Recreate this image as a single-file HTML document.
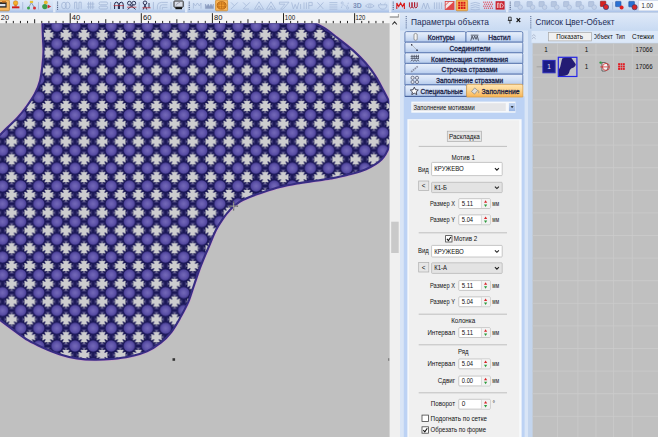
<!DOCTYPE html>
<html><head><meta charset="utf-8"><title>UI</title>
<style>html,body{margin:0;padding:0;background:#c0c0c0}body{width:658px;height:437px;overflow:hidden}svg{display:block}</style>
</head><body>
<svg width="658" height="437" viewBox="0 0 658 437" font-family="Liberation Sans, sans-serif">
<defs>
<linearGradient id="gTb" x1="0" y1="0" x2="0" y2="1"><stop offset="0" stop-color="#dde8f8"/><stop offset="0.7" stop-color="#c9daf1"/><stop offset="0.86" stop-color="#b4c9ea"/><stop offset="1" stop-color="#a0bbe6"/></linearGradient>
<linearGradient id="gTitle" x1="0" y1="0" x2="0" y2="1"><stop offset="0" stop-color="#dfe9f8"/><stop offset="1" stop-color="#c8daf2"/></linearGradient>
<linearGradient id="gTab" x1="0" y1="0" x2="0" y2="1"><stop offset="0" stop-color="#eaf1fc"/><stop offset="0.5" stop-color="#d3e1f6"/><stop offset="1" stop-color="#b4caec"/></linearGradient>
<linearGradient id="gTabA" x1="0" y1="0" x2="0" y2="1"><stop offset="0" stop-color="#ffe6b4"/><stop offset="0.5" stop-color="#fdd38c"/><stop offset="1" stop-color="#f8b454"/></linearGradient>
<linearGradient id="gBtnB" x1="0" y1="0" x2="0" y2="1"><stop offset="0" stop-color="#c6d8f2"/><stop offset="1" stop-color="#9ab6e4"/></linearGradient>
<radialGradient id="rg" cx="50%" cy="50%" r="50%"><stop offset="0" stop-color="#7469b8"/><stop offset="0.5" stop-color="#6358ac"/><stop offset="0.85" stop-color="#52479e"/><stop offset="1" stop-color="#453a92"/></radialGradient>
<pattern id="mot" x="47.84" y="17.11" width="18.11" height="17.78" patternUnits="userSpaceOnUse">
<rect width="18.11" height="17.78" fill="#cdcdcf"/>
<circle cx="-9.05" cy="-8.89" r="6.9" fill="#2c2476"/><rect x="-4.05" y="-11.49" width="8.11" height="5.2" fill="#241d6a" opacity="0.85"/><rect x="-11.55" y="-3.89" width="5" height="7.78" fill="#241d6a" opacity="0.85"/><path d="M-4.65 -7.34L1.54 -7.99L1.54 -9.79L-4.65 -10.44ZM-5.58 -5.77L-0.65 -4.87L-0.27 -5.79L-4.40 -8.64ZM-7.04 -4.68L-2.83 -1.96L-2.13 -2.67L-4.85 -6.87ZM-8.80 -4.23L-5.96 -0.11L-5.03 -0.49L-5.94 -5.42ZM-10.61 -4.49L-9.96 1.71L-8.15 1.71L-7.50 -4.49ZM-12.17 -5.42L-13.08 -0.49L-12.15 -0.11L-9.31 -4.23ZM-13.26 -6.87L-15.98 -2.67L-15.28 -1.96L-11.07 -4.68ZM-13.71 -8.64L-17.84 -5.79L-17.46 -4.87L-12.53 -5.77ZM-13.46 -10.44L-19.66 -9.79L-19.66 -7.99L-13.46 -7.34ZM-12.53 -12.01L-17.46 -12.91L-17.84 -11.99L-13.71 -9.14ZM-11.07 -13.10L-15.28 -15.82L-15.98 -15.11L-13.26 -10.91ZM-9.31 -13.55L-12.15 -17.67L-13.08 -17.29L-12.17 -12.36ZM-7.50 -13.29L-8.16 -19.49L-9.96 -19.49L-10.61 -13.29ZM-5.94 -12.36L-5.03 -17.29L-5.96 -17.67L-8.80 -13.55ZM-4.85 -10.91L-2.13 -15.11L-2.83 -15.82L-7.04 -13.10ZM-4.40 -9.14L-0.27 -11.99L-0.65 -12.91L-5.58 -12.01Z" fill="#1a1755"/><circle cx="-9.05" cy="8.89" r="6.9" fill="#2c2476"/><rect x="-4.05" y="6.29" width="8.11" height="5.2" fill="#241d6a" opacity="0.85"/><rect x="-11.55" y="13.89" width="5" height="7.78" fill="#241d6a" opacity="0.85"/><path d="M-4.65 10.44L1.54 9.79L1.54 7.99L-4.65 7.34ZM-5.58 12.01L-0.65 12.91L-0.27 11.99L-4.40 9.14ZM-7.04 13.10L-2.83 15.82L-2.13 15.11L-4.85 10.91ZM-8.80 13.55L-5.96 17.67L-5.03 17.29L-5.94 12.36ZM-10.61 13.29L-9.96 19.49L-8.15 19.49L-7.50 13.29ZM-12.17 12.36L-13.08 17.29L-12.15 17.67L-9.31 13.55ZM-13.26 10.91L-15.98 15.11L-15.28 15.82L-11.07 13.10ZM-13.71 9.14L-17.84 11.99L-17.46 12.91L-12.53 12.01ZM-13.46 7.34L-19.66 7.99L-19.66 9.79L-13.46 10.44ZM-12.53 5.77L-17.46 4.87L-17.84 5.79L-13.71 8.64ZM-11.07 4.68L-15.28 1.96L-15.98 2.67L-13.26 6.87ZM-9.31 4.23L-12.15 0.11L-13.08 0.49L-12.17 5.42ZM-7.50 4.49L-8.16 -1.71L-9.96 -1.71L-10.61 4.49ZM-5.94 5.42L-5.03 0.49L-5.96 0.11L-8.80 4.23ZM-4.85 6.87L-2.13 2.67L-2.83 1.96L-7.04 4.68ZM-4.40 8.64L-0.27 5.79L-0.65 4.87L-5.58 5.77Z" fill="#1a1755"/><circle cx="-9.05" cy="26.67" r="6.9" fill="#2c2476"/><rect x="-4.05" y="24.07" width="8.11" height="5.2" fill="#241d6a" opacity="0.85"/><rect x="-11.55" y="31.67" width="5" height="7.78" fill="#241d6a" opacity="0.85"/><path d="M-4.65 28.22L1.54 27.57L1.54 25.77L-4.65 25.12ZM-5.58 29.79L-0.65 30.69L-0.27 29.77L-4.40 26.92ZM-7.04 30.88L-2.83 33.60L-2.13 32.89L-4.85 28.69ZM-8.80 31.33L-5.96 35.45L-5.03 35.07L-5.94 30.14ZM-10.61 31.07L-9.96 37.27L-8.15 37.27L-7.50 31.07ZM-12.17 30.14L-13.08 35.07L-12.15 35.45L-9.31 31.33ZM-13.26 28.69L-15.98 32.89L-15.28 33.60L-11.07 30.88ZM-13.71 26.92L-17.84 29.77L-17.46 30.69L-12.53 29.79ZM-13.46 25.12L-19.66 25.77L-19.66 27.57L-13.46 28.22ZM-12.53 23.55L-17.46 22.65L-17.84 23.57L-13.71 26.42ZM-11.07 22.46L-15.28 19.74L-15.98 20.45L-13.26 24.65ZM-9.31 22.01L-12.15 17.89L-13.08 18.27L-12.17 23.20ZM-7.50 22.27L-8.16 16.07L-9.96 16.07L-10.61 22.27ZM-5.94 23.20L-5.03 18.27L-5.96 17.89L-8.80 22.01ZM-4.85 24.65L-2.13 20.45L-2.83 19.74L-7.04 22.46ZM-4.40 26.42L-0.27 23.57L-0.65 22.65L-5.58 23.55Z" fill="#1a1755"/><circle cx="9.05" cy="-8.89" r="6.9" fill="#2c2476"/><rect x="14.05" y="-11.49" width="8.11" height="5.2" fill="#241d6a" opacity="0.85"/><rect x="6.55" y="-3.89" width="5" height="7.78" fill="#241d6a" opacity="0.85"/><path d="M13.46 -7.34L19.66 -7.99L19.66 -9.79L13.46 -10.44ZM12.53 -5.77L17.46 -4.87L17.84 -5.79L13.71 -8.64ZM11.07 -4.68L15.28 -1.96L15.98 -2.67L13.26 -6.87ZM9.31 -4.23L12.15 -0.11L13.08 -0.49L12.17 -5.42ZM7.50 -4.49L8.15 1.71L9.96 1.71L10.61 -4.49ZM5.94 -5.42L5.03 -0.49L5.96 -0.11L8.80 -4.23ZM4.85 -6.87L2.13 -2.67L2.83 -1.96L7.04 -4.68ZM4.40 -8.64L0.27 -5.79L0.65 -4.87L5.58 -5.77ZM4.65 -10.44L-1.54 -9.79L-1.54 -7.99L4.65 -7.34ZM5.58 -12.01L0.65 -12.91L0.27 -11.99L4.40 -9.14ZM7.04 -13.10L2.83 -15.82L2.13 -15.11L4.85 -10.91ZM8.80 -13.55L5.96 -17.67L5.03 -17.29L5.94 -12.36ZM10.61 -13.29L9.95 -19.49L8.15 -19.49L7.50 -13.29ZM12.17 -12.36L13.08 -17.29L12.15 -17.67L9.31 -13.55ZM13.26 -10.91L15.98 -15.11L15.28 -15.82L11.07 -13.10ZM13.71 -9.14L17.84 -11.99L17.46 -12.91L12.53 -12.01Z" fill="#1a1755"/><circle cx="9.05" cy="8.89" r="6.9" fill="#2c2476"/><rect x="14.05" y="6.29" width="8.11" height="5.2" fill="#241d6a" opacity="0.85"/><rect x="6.55" y="13.89" width="5" height="7.78" fill="#241d6a" opacity="0.85"/><path d="M13.46 10.44L19.66 9.79L19.66 7.99L13.46 7.34ZM12.53 12.01L17.46 12.91L17.84 11.99L13.71 9.14ZM11.07 13.10L15.28 15.82L15.98 15.11L13.26 10.91ZM9.31 13.55L12.15 17.67L13.08 17.29L12.17 12.36ZM7.50 13.29L8.15 19.49L9.96 19.49L10.61 13.29ZM5.94 12.36L5.03 17.29L5.96 17.67L8.80 13.55ZM4.85 10.91L2.13 15.11L2.83 15.82L7.04 13.10ZM4.40 9.14L0.27 11.99L0.65 12.91L5.58 12.01ZM4.65 7.34L-1.54 7.99L-1.54 9.79L4.65 10.44ZM5.58 5.77L0.65 4.87L0.27 5.79L4.40 8.64ZM7.04 4.68L2.83 1.96L2.13 2.67L4.85 6.87ZM8.80 4.23L5.96 0.11L5.03 0.49L5.94 5.42ZM10.61 4.49L9.95 -1.71L8.15 -1.71L7.50 4.49ZM12.17 5.42L13.08 0.49L12.15 0.11L9.31 4.23ZM13.26 6.87L15.98 2.67L15.28 1.96L11.07 4.68ZM13.71 8.64L17.84 5.79L17.46 4.87L12.53 5.77Z" fill="#1a1755"/><circle cx="9.05" cy="26.67" r="6.9" fill="#2c2476"/><rect x="14.05" y="24.07" width="8.11" height="5.2" fill="#241d6a" opacity="0.85"/><rect x="6.55" y="31.67" width="5" height="7.78" fill="#241d6a" opacity="0.85"/><path d="M13.46 28.22L19.66 27.57L19.66 25.77L13.46 25.12ZM12.53 29.79L17.46 30.69L17.84 29.77L13.71 26.92ZM11.07 30.88L15.28 33.60L15.98 32.89L13.26 28.69ZM9.31 31.33L12.15 35.45L13.08 35.07L12.17 30.14ZM7.50 31.07L8.15 37.27L9.96 37.27L10.61 31.07ZM5.94 30.14L5.03 35.07L5.96 35.45L8.80 31.33ZM4.85 28.69L2.13 32.89L2.83 33.60L7.04 30.88ZM4.40 26.92L0.27 29.77L0.65 30.69L5.58 29.79ZM4.65 25.12L-1.54 25.77L-1.54 27.57L4.65 28.22ZM5.58 23.55L0.65 22.65L0.27 23.57L4.40 26.42ZM7.04 22.46L2.83 19.74L2.13 20.45L4.85 24.65ZM8.80 22.01L5.96 17.89L5.03 18.27L5.94 23.20ZM10.61 22.27L9.95 16.07L8.15 16.07L7.50 22.27ZM12.17 23.20L13.08 18.27L12.15 17.89L9.31 22.01ZM13.26 24.65L15.98 20.45L15.28 19.74L11.07 22.46ZM13.71 26.42L17.84 23.57L17.46 22.65L12.53 23.55Z" fill="#1a1755"/><circle cx="27.16" cy="-8.89" r="6.9" fill="#2c2476"/><rect x="32.16" y="-11.49" width="8.11" height="5.2" fill="#241d6a" opacity="0.85"/><rect x="24.66" y="-3.89" width="5" height="7.78" fill="#241d6a" opacity="0.85"/><path d="M31.56 -7.34L37.77 -7.99L37.77 -9.79L31.56 -10.44ZM30.64 -5.77L35.57 -4.87L35.95 -5.79L31.82 -8.64ZM29.18 -4.68L33.39 -1.96L34.09 -2.67L31.37 -6.87ZM27.42 -4.23L30.26 -0.11L31.19 -0.49L30.28 -5.42ZM25.61 -4.49L26.27 1.71L28.06 1.71L28.71 -4.49ZM24.05 -5.42L23.14 -0.49L24.07 -0.11L26.91 -4.23ZM22.96 -6.87L20.24 -2.67L20.94 -1.96L25.15 -4.68ZM22.51 -8.64L18.38 -5.79L18.76 -4.87L23.69 -5.77ZM22.77 -10.44L16.56 -9.79L16.56 -7.99L22.77 -7.34ZM23.69 -12.01L18.76 -12.91L18.38 -11.99L22.51 -9.14ZM25.15 -13.10L20.94 -15.82L20.24 -15.11L22.96 -10.91ZM26.91 -13.55L24.07 -17.67L23.14 -17.29L24.05 -12.36ZM28.71 -13.29L28.06 -19.49L26.26 -19.49L25.61 -13.29ZM30.28 -12.36L31.19 -17.29L30.26 -17.67L27.42 -13.55ZM31.37 -10.91L34.09 -15.11L33.39 -15.82L29.18 -13.10ZM31.82 -9.14L35.95 -11.99L35.57 -12.91L30.64 -12.01Z" fill="#1a1755"/><circle cx="27.16" cy="8.89" r="6.9" fill="#2c2476"/><rect x="32.16" y="6.29" width="8.11" height="5.2" fill="#241d6a" opacity="0.85"/><rect x="24.66" y="13.89" width="5" height="7.78" fill="#241d6a" opacity="0.85"/><path d="M31.56 10.44L37.77 9.79L37.77 7.99L31.56 7.34ZM30.64 12.01L35.57 12.91L35.95 11.99L31.82 9.14ZM29.18 13.10L33.39 15.82L34.09 15.11L31.37 10.91ZM27.42 13.55L30.26 17.67L31.19 17.29L30.28 12.36ZM25.61 13.29L26.27 19.49L28.06 19.49L28.71 13.29ZM24.05 12.36L23.14 17.29L24.07 17.67L26.91 13.55ZM22.96 10.91L20.24 15.11L20.94 15.82L25.15 13.10ZM22.51 9.14L18.38 11.99L18.76 12.91L23.69 12.01ZM22.77 7.34L16.56 7.99L16.56 9.79L22.77 10.44ZM23.69 5.77L18.76 4.87L18.38 5.79L22.51 8.64ZM25.15 4.68L20.94 1.96L20.24 2.67L22.96 6.87ZM26.91 4.23L24.07 0.11L23.14 0.49L24.05 5.42ZM28.71 4.49L28.06 -1.71L26.26 -1.71L25.61 4.49ZM30.28 5.42L31.19 0.49L30.26 0.11L27.42 4.23ZM31.37 6.87L34.09 2.67L33.39 1.96L29.18 4.68ZM31.82 8.64L35.95 5.79L35.57 4.87L30.64 5.77Z" fill="#1a1755"/><circle cx="27.16" cy="26.67" r="6.9" fill="#2c2476"/><rect x="32.16" y="24.07" width="8.11" height="5.2" fill="#241d6a" opacity="0.85"/><rect x="24.66" y="31.67" width="5" height="7.78" fill="#241d6a" opacity="0.85"/><path d="M31.56 28.22L37.77 27.57L37.77 25.77L31.56 25.12ZM30.64 29.79L35.57 30.69L35.95 29.77L31.82 26.92ZM29.18 30.88L33.39 33.60L34.09 32.89L31.37 28.69ZM27.42 31.33L30.26 35.45L31.19 35.07L30.28 30.14ZM25.61 31.07L26.27 37.27L28.06 37.27L28.71 31.07ZM24.05 30.14L23.14 35.07L24.07 35.45L26.91 31.33ZM22.96 28.69L20.24 32.89L20.94 33.60L25.15 30.88ZM22.51 26.92L18.38 29.77L18.76 30.69L23.69 29.79ZM22.77 25.12L16.56 25.77L16.56 27.57L22.77 28.22ZM23.69 23.55L18.76 22.65L18.38 23.57L22.51 26.42ZM25.15 22.46L20.94 19.74L20.24 20.45L22.96 24.65ZM26.91 22.01L24.07 17.89L23.14 18.27L24.05 23.20ZM28.71 22.27L28.06 16.07L26.26 16.07L25.61 22.27ZM30.28 23.20L31.19 18.27L30.26 17.89L27.42 22.01ZM31.37 24.65L34.09 20.45L33.39 19.74L29.18 22.46ZM31.82 26.42L35.95 23.57L35.57 22.65L30.64 23.55Z" fill="#1a1755"/>
<circle cx="9.055" cy="8.89" r="5.7" fill="url(#rg)"/>
</pattern>
<clipPath id="cv"><rect x="0" y="23" width="389.6" height="414"/></clipPath>
</defs>
<rect x="0" y="0" width="658" height="437" fill="#c0c0c0"/>
<g clip-path="url(#cv)"><g style="filter:blur(0.45px)">
<path d="M42.5 23.0C87.8 23.0 269.2 23.0 314.5 23.0C316.1 23.8 320.2 25.6 324.0 28.0C327.8 30.4 332.2 33.9 337.0 37.6C341.8 41.3 348.2 46.1 353.0 50.4C357.8 54.7 362.1 59.0 365.8 63.3C369.5 67.6 372.5 71.5 375.4 76.0C378.3 80.5 381.0 86.0 383.4 90.5C385.8 95.0 388.2 98.8 389.6 103.0C391.0 107.2 391.2 111.2 391.5 116.0C391.8 120.8 391.9 126.9 391.5 132.0C391.1 137.1 390.9 141.9 389.2 146.5C387.5 151.1 385.4 155.7 381.5 159.5C377.6 163.3 371.8 166.6 366.0 169.2C360.2 171.8 352.9 173.4 347.0 175.0C341.1 176.6 336.0 177.5 330.5 178.5C325.0 179.5 319.4 180.2 313.8 181.0C308.2 181.8 302.6 182.5 297.0 183.5C291.4 184.5 285.6 185.6 280.0 187.0C274.4 188.4 268.7 190.3 263.6 192.0C258.5 193.7 253.7 195.3 249.6 197.0C245.5 198.7 242.0 200.2 238.8 202.3C235.6 204.4 232.9 206.7 230.2 209.6C227.4 212.5 224.7 216.1 222.3 219.6C219.9 223.1 217.8 226.3 215.8 230.3C213.8 234.3 212.0 239.1 210.2 243.4C208.4 247.7 206.5 251.9 204.8 256.0C203.1 260.1 201.8 263.0 200.0 267.8C198.2 272.6 196.2 278.9 194.2 284.6C192.2 290.3 190.6 296.6 188.2 302.2C185.8 307.8 182.8 313.0 180.0 318.0C177.2 323.0 174.5 327.9 171.3 332.0C168.1 336.1 164.9 339.5 160.8 342.7C156.7 345.9 152.1 349.1 146.9 351.4C141.7 353.7 135.2 355.3 129.4 356.6C123.6 357.9 117.7 358.5 111.9 359.0C106.1 359.5 100.2 359.9 94.4 359.8C88.6 359.7 82.7 359.3 76.9 358.4C71.1 357.5 65.2 356.1 59.4 354.2C53.6 352.3 47.2 349.5 42.0 347.2C36.8 344.9 32.7 343.0 28.0 340.2C23.3 337.4 18.7 333.8 14.0 330.4C9.3 327.0 2.8 322.1 0.0 320.0C-2.8 317.9 -2.5 318.3 -3.0 318.0C-3.0 288.0 -3.0 168.0 -3.0 138.0C-2.5 137.5 -1.8 136.8 0.0 135.0C1.8 133.2 5.1 129.9 8.0 127.0C10.9 124.1 14.4 121.1 17.6 117.6C20.8 114.1 24.1 110.0 27.0 106.0C29.9 102.0 32.8 97.8 35.0 93.6C37.2 89.4 38.8 85.8 40.0 81.0C41.2 76.2 41.9 69.8 42.5 65.0C43.1 60.2 43.4 56.3 43.5 52.0C43.6 47.7 43.2 43.8 43.0 39.0C42.8 34.2 42.6 25.7 42.5 23.0Z" fill="none" stroke="#e070dc" stroke-width="3.1" opacity="0.45"/>
<path d="M42.5 23.0C87.8 23.0 269.2 23.0 314.5 23.0C316.1 23.8 320.2 25.6 324.0 28.0C327.8 30.4 332.2 33.9 337.0 37.6C341.8 41.3 348.2 46.1 353.0 50.4C357.8 54.7 362.1 59.0 365.8 63.3C369.5 67.6 372.5 71.5 375.4 76.0C378.3 80.5 381.0 86.0 383.4 90.5C385.8 95.0 388.2 98.8 389.6 103.0C391.0 107.2 391.2 111.2 391.5 116.0C391.8 120.8 391.9 126.9 391.5 132.0C391.1 137.1 390.9 141.9 389.2 146.5C387.5 151.1 385.4 155.7 381.5 159.5C377.6 163.3 371.8 166.6 366.0 169.2C360.2 171.8 352.9 173.4 347.0 175.0C341.1 176.6 336.0 177.5 330.5 178.5C325.0 179.5 319.4 180.2 313.8 181.0C308.2 181.8 302.6 182.5 297.0 183.5C291.4 184.5 285.6 185.6 280.0 187.0C274.4 188.4 268.7 190.3 263.6 192.0C258.5 193.7 253.7 195.3 249.6 197.0C245.5 198.7 242.0 200.2 238.8 202.3C235.6 204.4 232.9 206.7 230.2 209.6C227.4 212.5 224.7 216.1 222.3 219.6C219.9 223.1 217.8 226.3 215.8 230.3C213.8 234.3 212.0 239.1 210.2 243.4C208.4 247.7 206.5 251.9 204.8 256.0C203.1 260.1 201.8 263.0 200.0 267.8C198.2 272.6 196.2 278.9 194.2 284.6C192.2 290.3 190.6 296.6 188.2 302.2C185.8 307.8 182.8 313.0 180.0 318.0C177.2 323.0 174.5 327.9 171.3 332.0C168.1 336.1 164.9 339.5 160.8 342.7C156.7 345.9 152.1 349.1 146.9 351.4C141.7 353.7 135.2 355.3 129.4 356.6C123.6 357.9 117.7 358.5 111.9 359.0C106.1 359.5 100.2 359.9 94.4 359.8C88.6 359.7 82.7 359.3 76.9 358.4C71.1 357.5 65.2 356.1 59.4 354.2C53.6 352.3 47.2 349.5 42.0 347.2C36.8 344.9 32.7 343.0 28.0 340.2C23.3 337.4 18.7 333.8 14.0 330.4C9.3 327.0 2.8 322.1 0.0 320.0C-2.8 317.9 -2.5 318.3 -3.0 318.0C-3.0 288.0 -3.0 168.0 -3.0 138.0C-2.5 137.5 -1.8 136.8 0.0 135.0C1.8 133.2 5.1 129.9 8.0 127.0C10.9 124.1 14.4 121.1 17.6 117.6C20.8 114.1 24.1 110.0 27.0 106.0C29.9 102.0 32.8 97.8 35.0 93.6C37.2 89.4 38.8 85.8 40.0 81.0C41.2 76.2 41.9 69.8 42.5 65.0C43.1 60.2 43.4 56.3 43.5 52.0C43.6 47.7 43.2 43.8 43.0 39.0C42.8 34.2 42.6 25.7 42.5 23.0Z" fill="url(#mot)" stroke="#372e82" stroke-width="2.1"/>
</g>
<rect x="172.5" y="358.2" width="2.6" height="2.6" fill="#333"/>
<rect x="388.4" y="358.2" width="1.2" height="2.6" fill="#555"/>
<path d="M233.6 201.6v9M229.1 206.1h9" stroke="#5e5e5e" stroke-width="1.2" fill="none"/>
<path d="M233.6 202.8v6.6M230.3 206.1h6.6" stroke="#e0e0e0" stroke-width="0.4" fill="none"/>
</g>
<rect x="0.00" y="0.00" width="658.00" height="12.70" fill="url(#gTb)" />
<rect x="0.00" y="12.60" width="658.00" height="0.50" fill="#e4ecf8" />
<rect x="-2.00" y="0.00" width="11.40" height="10.80" fill="#f8b75e" stroke="#c8862c" stroke-width="0.8" rx="1" />
<rect x="0.00" y="2.20" width="6.60" height="5.40" fill="#2a2a2a" />
<rect x="0.00" y="4.00" width="5.40" height="2.20" fill="#dfe3ea" />
<rect x="2.00" y="1.20" width="4.00" height="1.40" fill="#c06a1a" />
<circle cx="15.6" cy="3" r="2.3" fill="#f4b02a" stroke="#c87818" stroke-width="0.5"/>
<rect x="14.40" y="4.80" width="2.40" height="1.80" fill="#e07a20" />
<rect x="12.00" y="6.40" width="7.40" height="1.90" fill="#d01c1c" />
<line x1="22.70" y1="2.00" x2="22.70" y2="9.50" stroke="#9fb2d2" stroke-width="0.7" />
<path d="M31.4 2.6L28.6 7.6M31.4 2.6L34.4 7.6" fill="none" stroke="#6a7a9a" stroke-width="0.7" />
<rect x="29.90" y="0.80" width="3.20" height="2.20" fill="#e8c038" />
<circle cx="28.5" cy="8" r="1.5" fill="#38a048"/>
<circle cx="34.5" cy="8" r="1.5" fill="#d83038"/>
<line x1="38.50" y1="2.00" x2="38.50" y2="9.50" stroke="#9fb2d2" stroke-width="0.7" />
<circle cx="45.8" cy="2.4" r="1.9" fill="#e8b830"/>
<circle cx="44.8" cy="6.6" r="2.6" fill="#3c9a48"/>
<path d="M47.6 4.6l3.6 2-3.6 2z" fill="#d02c34" />
<rect x="53.10" y="0.00" width="2.40" height="12.40" fill="#dfe9f8" />
<rect x="57.10" y="1.60" width="1.00" height="1.00" fill="#44557a" /><rect x="57.10" y="3.40" width="1.00" height="1.00" fill="#44557a" /><rect x="57.10" y="5.20" width="1.00" height="1.00" fill="#44557a" /><rect x="57.10" y="7.00" width="1.00" height="1.00" fill="#44557a" /><rect x="57.10" y="8.80" width="1.00" height="1.00" fill="#44557a" />
<path d="M64 2.2a2.4 3.3 0 1 0 0 6.6a2.4 3.3 0 1 0 0-6.6M67.6 2.2a2.4 3.3 0 1 0 0 6.6a2.4 3.3 0 1 0 0-6.6" fill="none" stroke="#a6b9d8" stroke-width="0.9" />
<path d="M74.6 8.8V2.2h2.2v6.6h2.2V2.2h2.2v6.6" fill="none" stroke="#a6b9d8" stroke-width="0.9" />
<path d="M87 4h7.4M87 7h7.4M88.6 1.8v7.4M90.7 1.8v7.4M92.8 1.8v7.4" fill="none" stroke="#a6b9d8" stroke-width="0.9" />
<rect x="99.00" y="2.00" width="8.60" height="2.80" fill="none" stroke="#a6b9d8" stroke-width="0.9" rx="1.4" />
<rect x="99.00" y="6.20" width="8.60" height="2.80" fill="none" stroke="#a6b9d8" stroke-width="0.9" rx="1.4" />
<line x1="110.60" y1="2.00" x2="110.60" y2="9.50" stroke="#9fb2d2" stroke-width="0.7" />
<path d="M114.6 9v-4.6q0-2.2 1.9-2.2t1.9 2.2v4.6M119.4 9v-4.6q0-2.2 1.9-2.2t1.9 2.2v4.6" fill="none" stroke="#1e2448" stroke-width="1.0" />
<line x1="113.60" y1="5.60" x2="124.00" y2="5.60" stroke="#c02a30" stroke-width="0.7" />
<circle cx="129.4" cy="3.2" r="1.9" fill="none" stroke="#1e2448" stroke-width="0.9"/><circle cx="133.8" cy="3.2" r="1.9" fill="none" stroke="#1e2448" stroke-width="0.9"/>
<path d="M127.6 9.4l6-5M135.6 9.4l-6-5" fill="none" stroke="#1e2448" stroke-width="0.9" />
<line x1="127.00" y1="7.20" x2="136.40" y2="7.20" stroke="#c02a30" stroke-width="0.7" />
<line x1="139.20" y1="2.00" x2="139.20" y2="9.50" stroke="#9fb2d2" stroke-width="0.7" />
<circle cx="145" cy="2.8" r="1.8" fill="none" stroke="#1e2448" stroke-width="0.9"/>
<path d="M143.2 9.6l1.8-4.6 1.8 4.6M149 3v5" fill="none" stroke="#1e2448" stroke-width="0.9" />
<line x1="142.40" y1="7.80" x2="150.60" y2="7.80" stroke="#c02a30" stroke-width="0.8" />
<line x1="153.40" y1="2.00" x2="153.40" y2="9.50" stroke="#9fb2d2" stroke-width="0.7" />
<path d="M157.4 9.4V6q0-3.6 4-3.6h6.4M160 9.4V7q0-2.2 2.4-2.2h5M162.4 9.4V7.4h5" fill="none" stroke="#a6b9d8" stroke-width="0.8" />
<line x1="171.00" y1="2.00" x2="171.00" y2="9.50" stroke="#9fb2d2" stroke-width="0.7" />
<rect x="174.00" y="1.00" width="9.20" height="6.20" fill="#d8dde8" stroke="#2a2a2a" stroke-width="1" rx="0.6" />
<rect x="175.40" y="7.20" width="6.60" height="2.00" fill="#111" />
<path d="M176 5.6q1-3 4-3.2" fill="none" stroke="#778" stroke-width="0.6" />
<rect x="185.00" y="0.00" width="2.40" height="12.40" fill="#dfe9f8" />
<rect x="188.70" y="1.60" width="1.00" height="1.00" fill="#44557a" /><rect x="188.70" y="3.40" width="1.00" height="1.00" fill="#44557a" /><rect x="188.70" y="5.20" width="1.00" height="1.00" fill="#44557a" /><rect x="188.70" y="7.00" width="1.00" height="1.00" fill="#44557a" /><rect x="188.70" y="8.80" width="1.00" height="1.00" fill="#44557a" />
<path d="M193.4 8.6V3l2 3 2-3 2 3 1.6-3v5.6" fill="none" stroke="#a6b9d8" stroke-width="0.8" />
<path d="M205.4 8.6V4l1.4 2.4 1.4-2.4 1.4 2.4 1.4-2.4 1.4 2.4 1-2.4v4.6z" fill="#8a9cc0" stroke="#8a9cc0" stroke-width="0.5" />
<rect x="215.60" y="0.00" width="12.00" height="10.80" fill="#f9b457" stroke="#cc8a30" stroke-width="0.8" rx="1" />
<ellipse cx="221.6" cy="5.4" rx="4.4" ry="3.7" fill="#f4a030" stroke="#a85a10" stroke-width="0.8"/>
<path d="M217.4 4h8.4M217.4 6.8h8.4M221.6 1.8v7.2M219.4 2.4q-1.2 3 0 6M223.8 2.4q1.2 3 0 6" fill="none" stroke="#a85a10" stroke-width="0.5" />
<path d="M231 2.4l3.4 3.4 3.4-3.4M231 9l3.4-3.2" fill="none" stroke="#a6b9d8" stroke-width="0.8" />
<path d="M243 2.4l3.4 3.4 3.4-3.4M243 9l3.4-3.2M244 9h5" fill="none" stroke="#a6b9d8" stroke-width="0.8" />
<path d="M254.4 9.2l4.6-7.4 4.6 7.4zM257 9.2l2-3.4 2 3.4" fill="none" stroke="#a6b9d8" stroke-width="0.8" />
<path d="M266.4 9.2l4.6-7.4 4.6 7.4zM269 9.2l2-3.4 2 3.4" fill="none" stroke="#a6b9d8" stroke-width="0.8" />
<path d="M279.4 2.2h9.6l-6 7h-2.4l4.4-5h-5.6z" fill="none" stroke="#a6b9d8" stroke-width="0.8" />
<path d="M291.6 2.4l1.8 6.6 1.8-4.6 1.8 4.6 1.8-6.6M300.6 4v5" fill="none" stroke="#a6b9d8" stroke-width="0.8" />
<path d="M304 2.4v6.6M306.4 2.4v6.6M308.8 9V2.4h3.4v3.2h-3.4" fill="none" stroke="#a6b9d8" stroke-width="0.8" />
<path d="M317.4 2.4l6 6.6M323.4 2.4l-6 6.6" fill="none" stroke="#a6b9d8" stroke-width="0.8" />
<path d="M329.4 2.6h8M329.4 4.8h8M329.4 7h8M329.4 9.2h8" fill="none" stroke="#a6b9d8" stroke-width="0.8" />
<path d="M341.4 8q1-5 3.4-2.4t3.6-3" fill="none" stroke="#a6b9d8" stroke-width="0.8" stroke-dasharray="1.2 0.9"/>
<circle cx="342.2" cy="3" r="1.1" fill="none" stroke="#a6b9d8" stroke-width="0.7"/><circle cx="347.6" cy="8" r="1.1" fill="none" stroke="#a6b9d8" stroke-width="0.7"/>
<text x="353.00" y="8.40" font-size="7" fill="#7a8fb8" font-weight="bold" textLength="8.60" lengthAdjust="spacingAndGlyphs" >3D</text>
<path d="M365.4 6q4.4-4.4 8.8 0q-4.4 3.6-8.8 0z" fill="none" stroke="#a6b9d8" stroke-width="0.8" />
<circle cx="369.8" cy="6" r="1.3" fill="none" stroke="#a6b9d8" stroke-width="0.7"/>
<path d="M378.4 4.8h8.6q-.4 4.4-4.3 4.4t-4.3-4.4zM380 3l1.4 1.4M385.6 3l-1.4 1.4" fill="none" stroke="#a6b9d8" stroke-width="0.8" />
<rect x="389.00" y="0.00" width="2.40" height="12.40" fill="#dfe9f8" />
<rect x="392.70" y="1.60" width="1.00" height="1.00" fill="#44557a" /><rect x="392.70" y="3.40" width="1.00" height="1.00" fill="#44557a" /><rect x="392.70" y="5.20" width="1.00" height="1.00" fill="#44557a" /><rect x="392.70" y="7.00" width="1.00" height="1.00" fill="#44557a" /><rect x="392.70" y="8.80" width="1.00" height="1.00" fill="#44557a" />
<path d="M396.8 9V3l1.9 3.6 1.9-3.6 1.9 3.6 1.9-3.6v6" fill="none" stroke="#d81c1c" stroke-width="1.1" />
<path d="M409.4 2.4v4.4q1.3 2.4 2.6 0V2.4v4.4q1.3 2.4 2.6 0V2.4v4.4q1.3 2.4 2.6 0V2.4" fill="none" stroke="#b01c2c" stroke-width="1.0" />
<path d="M421.8 9l1.9-6 1.9 6 1.9-6 1.9 6" fill="none" stroke="#a6b9d8" stroke-width="0.9" />
<path d="M434.4 2.4v6.6M436.8 2.4v6.6M439.2 2.4v6.6M441.6 2.4v6.6" fill="none" stroke="#a6b9d8" stroke-width="0.9" />
<rect x="445.20" y="1.40" width="8.80" height="8.00" fill="#f4e6e6" stroke="#d83c3c" stroke-width="0.8" />
<path d="M445.2 9.4l8.8-8v8z" fill="#e04848" />
<path d="M445.2 5.4l4-4" fill="none" stroke="#d83c3c" stroke-width="0.8" />
<rect x="456.20" y="0.00" width="11.40" height="10.80" fill="#f9b457" stroke="#cc8a30" stroke-width="0.8" rx="1" />
<rect x="458.20" y="1.80" width="2.00" height="2.00" fill="#d61a1a" />
<rect x="458.20" y="4.40" width="2.00" height="2.00" fill="#d61a1a" />
<rect x="458.20" y="7.00" width="2.00" height="2.00" fill="#d61a1a" />
<rect x="460.80" y="1.80" width="2.00" height="2.00" fill="#d61a1a" />
<rect x="460.80" y="4.40" width="2.00" height="2.00" fill="#d61a1a" />
<rect x="460.80" y="7.00" width="2.00" height="2.00" fill="#d61a1a" />
<rect x="463.40" y="1.80" width="2.00" height="2.00" fill="#d61a1a" />
<rect x="463.40" y="4.40" width="2.00" height="2.00" fill="#d61a1a" />
<rect x="463.40" y="7.00" width="2.00" height="2.00" fill="#d61a1a" />
<path d="M470.6 3.6q4.6-2.4 9.2 0M470.6 5.8q4.6-2.4 9.2 0M470.6 8q4.6-2.4 9.2 0M470.6 9.4q4.6 1 9.2 0" fill="none" stroke="#a6b9d8" stroke-width="0.8" />
<rect x="483.20" y="1.60" width="1.10" height="1.20" fill="#e04858" />
<rect x="484.10" y="3.60" width="1.10" height="1.20" fill="#e04858" />
<rect x="483.20" y="5.60" width="1.10" height="1.20" fill="#e04858" />
<rect x="484.10" y="7.60" width="1.10" height="1.20" fill="#e04858" />
<rect x="485.15" y="1.60" width="1.10" height="1.20" fill="#e04858" />
<rect x="486.05" y="3.60" width="1.10" height="1.20" fill="#e04858" />
<rect x="485.15" y="5.60" width="1.10" height="1.20" fill="#e04858" />
<rect x="486.05" y="7.60" width="1.10" height="1.20" fill="#e04858" />
<rect x="487.10" y="1.60" width="1.10" height="1.20" fill="#e04858" />
<rect x="488.00" y="3.60" width="1.10" height="1.20" fill="#e04858" />
<rect x="487.10" y="5.60" width="1.10" height="1.20" fill="#e04858" />
<rect x="488.00" y="7.60" width="1.10" height="1.20" fill="#e04858" />
<rect x="489.05" y="1.60" width="1.10" height="1.20" fill="#e04858" />
<rect x="489.95" y="3.60" width="1.10" height="1.20" fill="#e04858" />
<rect x="489.05" y="5.60" width="1.10" height="1.20" fill="#e04858" />
<rect x="489.95" y="7.60" width="1.10" height="1.20" fill="#e04858" />
<rect x="491.00" y="1.60" width="1.10" height="1.20" fill="#e04858" />
<rect x="491.90" y="3.60" width="1.10" height="1.20" fill="#e04858" />
<rect x="491.00" y="5.60" width="1.10" height="1.20" fill="#e04858" />
<rect x="491.90" y="7.60" width="1.10" height="1.20" fill="#e04858" />
<rect x="495.60" y="1.20" width="9.00" height="8.40" fill="#c8202c" />
<path d="M497.4 8V3.2h1.6V8M500.6 8V3.2h1.2l1.6 2.4-1.6 2.4" fill="none" stroke="#f6e0e0" stroke-width="0.8" />
<rect x="506.00" y="0.00" width="2.40" height="12.40" fill="#dfe9f8" />
<rect x="509.70" y="1.60" width="1.00" height="1.00" fill="#44557a" /><rect x="509.70" y="3.40" width="1.00" height="1.00" fill="#44557a" /><rect x="509.70" y="5.20" width="1.00" height="1.00" fill="#44557a" /><rect x="509.70" y="7.00" width="1.00" height="1.00" fill="#44557a" /><rect x="509.70" y="8.80" width="1.00" height="1.00" fill="#44557a" />
<rect x="514.60" y="1.60" width="5.20" height="5.00" fill="#b7c7e0" stroke="#a6b9d8" stroke-width="0.7" rx="0.4" />
<circle cx="520.2" cy="7.2" r="2.3" fill="#c4d2e8" stroke="#a6b9d8" stroke-width="0.7"/>
<rect x="527.00" y="1.60" width="5.20" height="5.00" fill="#b7c7e0" stroke="#a6b9d8" stroke-width="0.7" rx="0.4" />
<circle cx="532.6" cy="7.2" r="2.3" fill="#c4d2e8" stroke="#a6b9d8" stroke-width="0.7"/>
<rect x="539.00" y="1.60" width="5.20" height="5.00" fill="#b7c7e0" stroke="#a6b9d8" stroke-width="0.7" rx="0.4" />
<circle cx="544.6" cy="7.2" r="2.3" fill="#c4d2e8" stroke="#a6b9d8" stroke-width="0.7"/>
<rect x="551.20" y="1.60" width="5.20" height="5.00" fill="#b7c7e0" stroke="#a6b9d8" stroke-width="0.7" rx="0.4" />
<circle cx="556.8" cy="7.2" r="2.3" fill="#c4d2e8" stroke="#a6b9d8" stroke-width="0.7"/>
<rect x="563.60" y="1.60" width="5.20" height="5.00" fill="#b7c7e0" stroke="#a6b9d8" stroke-width="0.7" rx="0.4" />
<circle cx="569.2" cy="7.2" r="2.3" fill="#c4d2e8" stroke="#a6b9d8" stroke-width="0.7"/>
<rect x="576.00" y="1.60" width="5.20" height="5.00" fill="#b7c7e0" stroke="#a6b9d8" stroke-width="0.7" rx="0.4" />
<circle cx="581.6" cy="7.2" r="2.3" fill="#c4d2e8" stroke="#a6b9d8" stroke-width="0.7"/>
<rect x="588.60" y="1.60" width="5.20" height="5.00" fill="#b7c7e0" stroke="#a6b9d8" stroke-width="0.7" rx="0.4" />
<circle cx="594.2" cy="7.2" r="2.3" fill="#c4d2e8" stroke="#a6b9d8" stroke-width="0.7"/>
<rect x="600.40" y="1.20" width="5.40" height="5.20" fill="#d62020" stroke="#8a1414" stroke-width="0.6" rx="0.4" />
<circle cx="606" cy="7" r="2.6" fill="#e02828" stroke="#283c7a" stroke-width="0.7"/>
<line x1="612.60" y1="2.00" x2="612.60" y2="9.50" stroke="#9fb2d2" stroke-width="0.7" />
<rect x="615.60" y="1.40" width="5.40" height="5.20" fill="#2a72d4" stroke="#1c4c9c" stroke-width="0.6" rx="0.4" />
<circle cx="621.6" cy="7.6" r="2" fill="#e02020"/>
<rect x="628.80" y="1.40" width="5.60" height="5.40" fill="#2a72d4" stroke="#1c4c9c" stroke-width="0.6" rx="0.4" />
<circle cx="634.6" cy="7.2" r="2.6" fill="#d82828" stroke="#283c7a" stroke-width="0.6"/>
<rect x="638.60" y="0.60" width="20.00" height="10.20" fill="#fbfcfe" stroke="#c4d0e4" stroke-width="0.6" />
<text x="641.60" y="8.20" font-size="6.6" fill="#222" textLength="11.60" lengthAdjust="spacingAndGlyphs" >1.00</text>
<rect x="0.00" y="13.00" width="390.00" height="10.20" fill="#f4f4f4" />
<rect x="-1.40" y="13.20" width="1.00" height="10.00" fill="#222" />
<rect x="5.71" y="20.90" width="1.00" height="2.30" fill="#222" />
<rect x="12.82" y="20.90" width="1.00" height="2.30" fill="#222" />
<rect x="19.93" y="20.90" width="1.00" height="2.30" fill="#222" />
<rect x="27.04" y="20.90" width="1.00" height="2.30" fill="#222" />
<rect x="34.15" y="19.20" width="1.00" height="4.00" fill="#222" />
<rect x="41.26" y="20.90" width="1.00" height="2.30" fill="#222" />
<rect x="48.37" y="20.90" width="1.00" height="2.30" fill="#222" />
<rect x="55.48" y="20.90" width="1.00" height="2.30" fill="#222" />
<rect x="62.59" y="20.90" width="1.00" height="2.30" fill="#222" />
<rect x="69.70" y="13.20" width="1.00" height="10.00" fill="#222" />
<rect x="76.81" y="20.90" width="1.00" height="2.30" fill="#222" />
<rect x="83.92" y="20.90" width="1.00" height="2.30" fill="#222" />
<rect x="91.03" y="20.90" width="1.00" height="2.30" fill="#222" />
<rect x="98.14" y="20.90" width="1.00" height="2.30" fill="#222" />
<rect x="105.25" y="19.20" width="1.00" height="4.00" fill="#222" />
<rect x="112.36" y="20.90" width="1.00" height="2.30" fill="#222" />
<rect x="119.47" y="20.90" width="1.00" height="2.30" fill="#222" />
<rect x="126.58" y="20.90" width="1.00" height="2.30" fill="#222" />
<rect x="133.69" y="20.90" width="1.00" height="2.30" fill="#222" />
<rect x="140.80" y="13.20" width="1.00" height="10.00" fill="#222" />
<rect x="147.91" y="20.90" width="1.00" height="2.30" fill="#222" />
<rect x="155.02" y="20.90" width="1.00" height="2.30" fill="#222" />
<rect x="162.13" y="20.90" width="1.00" height="2.30" fill="#222" />
<rect x="169.24" y="20.90" width="1.00" height="2.30" fill="#222" />
<rect x="176.35" y="19.20" width="1.00" height="4.00" fill="#222" />
<rect x="183.46" y="20.90" width="1.00" height="2.30" fill="#222" />
<rect x="190.57" y="20.90" width="1.00" height="2.30" fill="#222" />
<rect x="197.68" y="20.90" width="1.00" height="2.30" fill="#222" />
<rect x="204.79" y="20.90" width="1.00" height="2.30" fill="#222" />
<rect x="211.90" y="13.20" width="1.00" height="10.00" fill="#222" />
<rect x="219.01" y="20.90" width="1.00" height="2.30" fill="#222" />
<rect x="226.12" y="20.90" width="1.00" height="2.30" fill="#222" />
<rect x="233.23" y="20.90" width="1.00" height="2.30" fill="#222" />
<rect x="240.34" y="20.90" width="1.00" height="2.30" fill="#222" />
<rect x="247.45" y="19.20" width="1.00" height="4.00" fill="#222" />
<rect x="254.56" y="20.90" width="1.00" height="2.30" fill="#222" />
<rect x="261.67" y="20.90" width="1.00" height="2.30" fill="#222" />
<rect x="268.78" y="20.90" width="1.00" height="2.30" fill="#222" />
<rect x="275.89" y="20.90" width="1.00" height="2.30" fill="#222" />
<rect x="283.00" y="13.20" width="1.00" height="10.00" fill="#222" />
<rect x="290.11" y="20.90" width="1.00" height="2.30" fill="#222" />
<rect x="297.22" y="20.90" width="1.00" height="2.30" fill="#222" />
<rect x="304.33" y="20.90" width="1.00" height="2.30" fill="#222" />
<rect x="311.44" y="20.90" width="1.00" height="2.30" fill="#222" />
<rect x="318.55" y="19.20" width="1.00" height="4.00" fill="#222" />
<rect x="325.66" y="20.90" width="1.00" height="2.30" fill="#222" />
<rect x="332.77" y="20.90" width="1.00" height="2.30" fill="#222" />
<rect x="339.88" y="20.90" width="1.00" height="2.30" fill="#222" />
<rect x="346.99" y="20.90" width="1.00" height="2.30" fill="#222" />
<rect x="354.10" y="13.20" width="1.00" height="10.00" fill="#222" />
<rect x="361.21" y="20.90" width="1.00" height="2.30" fill="#222" />
<rect x="368.32" y="20.90" width="1.00" height="2.30" fill="#222" />
<rect x="375.43" y="20.90" width="1.00" height="2.30" fill="#222" />
<rect x="382.54" y="20.90" width="1.00" height="2.30" fill="#222" />
<text x="0.80" y="20.10" font-size="7.2" fill="#111" textLength="8.20" lengthAdjust="spacingAndGlyphs" >20</text>
<text x="71.80" y="20.10" font-size="7.2" fill="#111" textLength="8.40" lengthAdjust="spacingAndGlyphs" >40</text>
<text x="143.00" y="20.10" font-size="7.2" fill="#111" textLength="8.40" lengthAdjust="spacingAndGlyphs" >60</text>
<text x="214.00" y="20.10" font-size="7.2" fill="#111" textLength="8.40" lengthAdjust="spacingAndGlyphs" >80</text>
<text x="284.80" y="20.10" font-size="7.2" fill="#111" textLength="10.40" lengthAdjust="spacingAndGlyphs" >100</text>
<text x="355.60" y="20.10" font-size="7.2" fill="#111" textLength="9.80" lengthAdjust="spacingAndGlyphs" >120</text>
<rect x="389.60" y="13.00" width="10.40" height="424.00" fill="#f0f0f0" />
<rect x="389.60" y="13.00" width="9.00" height="3.60" fill="#fdfdfd" />
<line x1="389.80" y1="17.00" x2="398.60" y2="17.00" stroke="#666" stroke-width="0.9" />
<line x1="398.40" y1="14.00" x2="398.40" y2="17.20" stroke="#888" stroke-width="0.8" />
<path d="M392.3 24.5 L394.6 21.9 L396.9 24.5" fill="none" stroke="#333" stroke-width="1.1" />
<rect x="391.20" y="221.70" width="7.50" height="31.30" fill="#c9c9c9" />
<rect x="400.00" y="13.00" width="128.50" height="424.00" fill="#d9e5f6" />
<rect x="400.00" y="13.00" width="128.50" height="17.50" fill="url(#gTitle)" />
<rect x="405.70" y="16.00" width="1.00" height="1.00" fill="#506590" />
<rect x="405.70" y="17.90" width="1.00" height="1.00" fill="#506590" />
<rect x="405.70" y="19.80" width="1.00" height="1.00" fill="#506590" />
<rect x="405.70" y="21.70" width="1.00" height="1.00" fill="#506590" />
<rect x="405.70" y="23.60" width="1.00" height="1.00" fill="#506590" />
<rect x="405.70" y="25.50" width="1.00" height="1.00" fill="#506590" />
<rect x="405.70" y="27.40" width="1.00" height="1.00" fill="#506590" />
<text x="411.00" y="25.30" font-size="8.4" fill="#1d2c56" textLength="78.00" lengthAdjust="spacingAndGlyphs" >Параметры объекта</text>
<path d="M508.6 17.2h2.6v3.2h-2.6zM507.8 20.4h4.2M509.9 20.4v3.2" fill="none" stroke="#222" stroke-width="0.8" />
<path d="M516.6 18.2l3.6 3.8M520.2 18.2l-3.6 3.8" fill="none" stroke="#111" stroke-width="1.1" />
<rect x="403.80" y="96.40" width="120.80" height="341.00" fill="#bcd2f4" />
<path d="M404.9 42.2V33.1Q404.9 31.6 406.4 31.6H464.5Q466 31.6 466 33.1V42.2Z" fill="url(#gTab)" stroke="#4d6ca8" stroke-width="0.8" />
<path d="M466 42.2V33.1Q466 31.6 467.5 31.6H521.3Q522.8 31.6 522.8 33.1V42.2Z" fill="url(#gTab)" stroke="#4d6ca8" stroke-width="0.8" />
<path d="M404.9 52.8V43.7Q404.9 42.2 406.4 42.2H521.3Q522.8 42.2 522.8 43.7V52.8Z" fill="url(#gTab)" stroke="#4d6ca8" stroke-width="0.8" />
<path d="M404.9 63.4V54.3Q404.9 52.8 406.4 52.8H521.3Q522.8 52.8 522.8 54.3V63.4Z" fill="url(#gTab)" stroke="#4d6ca8" stroke-width="0.8" />
<path d="M404.9 74.2V64.9Q404.9 63.4 406.4 63.4H521.3Q522.8 63.4 522.8 64.9V74.2Z" fill="url(#gTab)" stroke="#4d6ca8" stroke-width="0.8" />
<path d="M404.9 84.9V75.7Q404.9 74.2 406.4 74.2H521.3Q522.8 74.2 522.8 75.7V84.9Z" fill="url(#gTab)" stroke="#4d6ca8" stroke-width="0.8" />
<path d="M404.9 96.4V86.4Q404.9 84.9 406.4 84.9H465.1Q466.6 84.9 466.6 86.4V96.4Z" fill="url(#gTab)" stroke="#4d6ca8" stroke-width="0.8" />
<path d="M466.6 97.0V85.80000000000001Q466.6 84.30000000000001 468.1 84.30000000000001H521.3Q522.8 84.30000000000001 522.8 85.80000000000001V97.0Z" fill="url(#gTabA)" stroke="#d9a04a" stroke-width="0.8" />
<line x1="404.90" y1="96.40" x2="466.60" y2="96.40" stroke="#44609a" stroke-width="0.9" />
<text x="427.80" y="40.30" font-size="7.1" fill="#1a2246" stroke="#1a2246" stroke-width="0.28" textLength="27.00" lengthAdjust="spacingAndGlyphs" >Контуры</text>
<text x="488.30" y="40.30" font-size="7.1" fill="#1a2246" stroke="#1a2246" stroke-width="0.28" textLength="22.40" lengthAdjust="spacingAndGlyphs" >Настил</text>
<text x="470.00" y="50.90" font-size="7.1" fill="#1a2246" text-anchor="middle" stroke="#1a2246" stroke-width="0.28" textLength="41.00" lengthAdjust="spacingAndGlyphs" >Соединители</text>
<text x="469.60" y="61.50" font-size="7.1" fill="#1a2246" text-anchor="middle" stroke="#1a2246" stroke-width="0.28" textLength="77.00" lengthAdjust="spacingAndGlyphs" >Компенсация стягивания</text>
<text x="469.60" y="72.30" font-size="7.1" fill="#1a2246" text-anchor="middle" stroke="#1a2246" stroke-width="0.28" textLength="56.00" lengthAdjust="spacingAndGlyphs" >Строчка стразами</text>
<text x="469.60" y="82.90" font-size="7.1" fill="#1a2246" text-anchor="middle" stroke="#1a2246" stroke-width="0.28" textLength="67.00" lengthAdjust="spacingAndGlyphs" >Заполнение стразами</text>
<text x="420.50" y="93.80" font-size="7.1" fill="#1a2246" stroke="#1a2246" stroke-width="0.28" textLength="42.50" lengthAdjust="spacingAndGlyphs" >Специальные</text>
<text x="481.50" y="93.80" font-size="7.1" fill="#1a2246" stroke="#1a2246" stroke-width="0.28" textLength="38.00" lengthAdjust="spacingAndGlyphs" >Заполнение</text>
<path d="M414 34.2q1.6-1.6 3.2 0v5.4q-1.6 1.4-3.2 0z" fill="#f4f4f4" stroke="#777" stroke-width="0.7" />
<path d="M470.8 40.6l1.3-4.6 1.3 3.4 1.3-3.4 1.3 3.4 1.3-3.4 1.2 4.6M470.8 35.2h7.6" fill="none" stroke="#4a4f5e" stroke-width="0.9" />
<path d="M411.5 44.6l5.5 5.4" fill="none" stroke="#888" stroke-width="0.5" />
<rect x="411.00" y="44.20" width="1.30" height="1.30" fill="#223" />
<rect x="416.30" y="49.60" width="1.60" height="1.30" fill="#223" />
<path d="M410.6 56.4h8.4M410.6 58.4h8.4M412 54.8v4M414.2 54.8v4M416.4 54.8v4M418.4 54.8v4M410.8 61.4l1.4-1.8 1.4 1.8 1.4-1.8 1.4 1.8 1.4-1.8 1.2 1.8" fill="none" stroke="#3a3f52" stroke-width="0.7" />
<path d="M411.2 71.8l6.8-5.6" fill="none" stroke="#8a8fa4" stroke-width="1.7" stroke-dasharray="1.6 0.7"/>
<circle cx="412.6" cy="77.8" r="1.6" fill="#e4e6ee" stroke="#4a5068" stroke-width="0.7"/>
<circle cx="417" cy="77.8" r="1.6" fill="#e4e6ee" stroke="#4a5068" stroke-width="0.7"/>
<circle cx="412.6" cy="82" r="1.6" fill="#e4e6ee" stroke="#4a5068" stroke-width="0.7"/>
<circle cx="417" cy="82" r="1.6" fill="#e4e6ee" stroke="#4a5068" stroke-width="0.7"/>
<path d="M414.3 87.2l1.2 2.5 2.8.3-2.1 1.9.6 2.7-2.5-1.4-2.5 1.4.6-2.7-2.1-1.9 2.8-.3z" fill="#fff" stroke="#223" stroke-width="0.8" />
<path d="M471.5 91.5l3.2-3.6 3 2.6-3.2 3.6z" fill="#ddd" stroke="#777" stroke-width="0.6" />
<path d="M477.8 90.2q1.6 1.4.8 3" fill="none" stroke="#888" stroke-width="0.8" />
<rect x="411.30" y="101.60" width="104.20" height="11.10" fill="#f6f8fb" />
<rect x="412.60" y="103.20" width="93.20" height="7.80" fill="#e4e5e8" />
<text x="413.40" y="109.90" font-size="6.7" fill="#111" textLength="61.50" lengthAdjust="spacingAndGlyphs" >Заполнение мотивами</text>
<rect x="508.90" y="103.00" width="6.30" height="8.20" fill="url(#gBtnB)" />
<path d="M510.6 106.2h3l-1.5 1.9z" fill="#111" />
<rect x="407.40" y="119.20" width="114.20" height="318.00" fill="#f8fafc" />
<rect x="408.80" y="120.30" width="110.40" height="317.00" fill="#f0f0f0" />
<rect x="447.30" y="131.20" width="34.30" height="10.40" fill="#e6e6e6" stroke="#adadad" stroke-width="0.7" />
<text x="464.40" y="138.70" font-size="6.7" fill="#111" text-anchor="middle" textLength="30.80" lengthAdjust="spacingAndGlyphs" >Раскладка</text>
<line x1="418.70" y1="146.40" x2="507.00" y2="146.40" stroke="#b4b4b4" stroke-width="0.8" />
<text x="463.20" y="159.80" font-size="6.7" fill="#111" text-anchor="middle" textLength="23.50" lengthAdjust="spacingAndGlyphs" >Мотив 1</text>
<text x="418.00" y="171.90" font-size="6.7" fill="#111" textLength="10.80" lengthAdjust="spacingAndGlyphs" >Вид</text>
<rect x="431.60" y="162.40" width="70.60" height="13.20" fill="#fff" stroke="#b2b2b2" stroke-width="0.7" rx="0.8" /><text x="434.30" y="171.30" font-size="6.7" fill="#111" textLength="29.50" lengthAdjust="spacingAndGlyphs" >КРУЖЕВО</text><path d="M494.9 168.1l2 2 2-2" fill="none" stroke="#222" stroke-width="1.1" />
<rect x="418.70" y="181.00" width="10.10" height="9.40" fill="#e6e6e6" stroke="#adadad" stroke-width="0.7" />
<text x="423.70" y="188.00" font-size="6.4" fill="#111" text-anchor="middle" >&lt;</text>
<rect x="431.60" y="182.30" width="70.60" height="10.30" fill="#e3e3e3" stroke="#b2b2b2" stroke-width="0.7" rx="0.8" /><text x="434.30" y="189.75" font-size="6.7" fill="#111" textLength="12.60" lengthAdjust="spacingAndGlyphs" >К1-Б</text><path d="M494.9 186.54999999999998l2 2 2-2" fill="none" stroke="#222" stroke-width="1.1" />
<text x="455.00" y="205.80" font-size="6.7" fill="#111" text-anchor="end" textLength="25.00" lengthAdjust="spacingAndGlyphs" >Размер X</text><rect x="458.80" y="198.70" width="31.40" height="9.80" fill="#fff" stroke="#b2b2b2" stroke-width="0.7" rx="0.8" /><rect x="481.40" y="199.20" width="8.30" height="8.80" fill="#f2f2f2" /><line x1="481.40" y1="199.10" x2="481.40" y2="208.10" stroke="#c4c4c4" stroke-width="0.6" /><text x="461.80" y="205.80" font-size="6.7" fill="#111" textLength="11.30" lengthAdjust="spacingAndGlyphs" >5.11</text><path d="M484.0 202.79999999999998h3.2l-1.6-2.5z" fill="#d8262a" /><path d="M484.0 204.4h3.2l-1.6 2.5z" fill="#2c9a3c" /><text x="492.30" y="205.80" font-size="6.6" fill="#111" textLength="6.80" lengthAdjust="spacingAndGlyphs" >мм</text>
<text x="455.00" y="222.00" font-size="6.7" fill="#111" text-anchor="end" textLength="25.00" lengthAdjust="spacingAndGlyphs" >Размер Y</text><rect x="458.80" y="214.90" width="31.40" height="9.80" fill="#fff" stroke="#b2b2b2" stroke-width="0.7" rx="0.8" /><rect x="481.40" y="215.40" width="8.30" height="8.80" fill="#f2f2f2" /><line x1="481.40" y1="215.30" x2="481.40" y2="224.30" stroke="#c4c4c4" stroke-width="0.6" /><text x="461.80" y="222.00" font-size="6.7" fill="#111" textLength="11.30" lengthAdjust="spacingAndGlyphs" >5.04</text><path d="M484.0 219.0h3.2l-1.6-2.5z" fill="#d8262a" /><path d="M484.0 220.60000000000002h3.2l-1.6 2.5z" fill="#2c9a3c" /><text x="492.30" y="222.00" font-size="6.6" fill="#111" textLength="6.80" lengthAdjust="spacingAndGlyphs" >мм</text>
<line x1="418.70" y1="232.80" x2="507.00" y2="232.80" stroke="#b4b4b4" stroke-width="0.8" />
<rect x="445.60" y="235.60" width="6.40" height="6.40" fill="#fff" stroke="#444" stroke-width="0.8" /><path d="M446.90000000000003 238.9l1.5 1.7 2.5-3.6" fill="none" stroke="#111" stroke-width="1.1" />
<text x="453.70" y="241.00" font-size="6.7" fill="#111" textLength="23.50" lengthAdjust="spacingAndGlyphs" >Мотив 2</text>
<text x="418.00" y="253.40" font-size="6.7" fill="#111" textLength="10.80" lengthAdjust="spacingAndGlyphs" >Вид</text>
<rect x="431.60" y="245.40" width="70.60" height="11.60" fill="#fff" stroke="#b2b2b2" stroke-width="0.7" rx="0.8" /><text x="434.30" y="253.50" font-size="6.7" fill="#111" textLength="29.50" lengthAdjust="spacingAndGlyphs" >КРУЖЕВО</text><path d="M494.9 250.29999999999998l2 2 2-2" fill="none" stroke="#222" stroke-width="1.1" />
<rect x="418.70" y="262.60" width="10.10" height="9.40" fill="#e6e6e6" stroke="#adadad" stroke-width="0.7" />
<text x="423.70" y="269.60" font-size="6.4" fill="#111" text-anchor="middle" >&lt;</text>
<rect x="431.60" y="262.80" width="70.60" height="10.60" fill="#e3e3e3" stroke="#b2b2b2" stroke-width="0.7" rx="0.8" /><text x="434.30" y="270.40" font-size="6.7" fill="#111" textLength="12.60" lengthAdjust="spacingAndGlyphs" >К1-А</text><path d="M494.9 267.20000000000005l2 2 2-2" fill="none" stroke="#222" stroke-width="1.1" />
<text x="455.00" y="287.70" font-size="6.7" fill="#111" text-anchor="end" textLength="25.00" lengthAdjust="spacingAndGlyphs" >Размер X</text><rect x="458.80" y="280.60" width="31.40" height="9.80" fill="#fff" stroke="#b2b2b2" stroke-width="0.7" rx="0.8" /><rect x="481.40" y="281.10" width="8.30" height="8.80" fill="#f2f2f2" /><line x1="481.40" y1="281.00" x2="481.40" y2="290.00" stroke="#c4c4c4" stroke-width="0.6" /><text x="461.80" y="287.70" font-size="6.7" fill="#111" textLength="11.30" lengthAdjust="spacingAndGlyphs" >5.11</text><path d="M484.0 284.7h3.2l-1.6-2.5z" fill="#d8262a" /><path d="M484.0 286.3h3.2l-1.6 2.5z" fill="#2c9a3c" /><text x="492.30" y="287.70" font-size="6.6" fill="#111" textLength="6.80" lengthAdjust="spacingAndGlyphs" >мм</text>
<text x="455.00" y="304.00" font-size="6.7" fill="#111" text-anchor="end" textLength="25.00" lengthAdjust="spacingAndGlyphs" >Размер Y</text><rect x="458.80" y="296.90" width="31.40" height="9.80" fill="#fff" stroke="#b2b2b2" stroke-width="0.7" rx="0.8" /><rect x="481.40" y="297.40" width="8.30" height="8.80" fill="#f2f2f2" /><line x1="481.40" y1="297.30" x2="481.40" y2="306.30" stroke="#c4c4c4" stroke-width="0.6" /><text x="461.80" y="304.00" font-size="6.7" fill="#111" textLength="11.30" lengthAdjust="spacingAndGlyphs" >5.04</text><path d="M484.0 301.0h3.2l-1.6-2.5z" fill="#d8262a" /><path d="M484.0 302.6h3.2l-1.6 2.5z" fill="#2c9a3c" /><text x="492.30" y="304.00" font-size="6.6" fill="#111" textLength="6.80" lengthAdjust="spacingAndGlyphs" >мм</text>
<line x1="418.70" y1="314.20" x2="507.00" y2="314.20" stroke="#b4b4b4" stroke-width="0.8" />
<text x="463.20" y="323.20" font-size="6.7" fill="#111" text-anchor="middle" textLength="24.00" lengthAdjust="spacingAndGlyphs" >Колонка</text>
<text x="455.00" y="334.80" font-size="6.7" fill="#111" text-anchor="end" textLength="27.60" lengthAdjust="spacingAndGlyphs" >Интервал</text><rect x="458.80" y="327.70" width="31.40" height="9.80" fill="#fff" stroke="#b2b2b2" stroke-width="0.7" rx="0.8" /><rect x="481.40" y="328.20" width="8.30" height="8.80" fill="#f2f2f2" /><line x1="481.40" y1="328.10" x2="481.40" y2="337.10" stroke="#c4c4c4" stroke-width="0.6" /><text x="461.80" y="334.80" font-size="6.7" fill="#111" textLength="11.30" lengthAdjust="spacingAndGlyphs" >5.11</text><path d="M484.0 331.8h3.2l-1.6-2.5z" fill="#d8262a" /><path d="M484.0 333.40000000000003h3.2l-1.6 2.5z" fill="#2c9a3c" /><text x="492.30" y="334.80" font-size="6.6" fill="#111" textLength="6.80" lengthAdjust="spacingAndGlyphs" >мм</text>
<line x1="418.70" y1="344.80" x2="507.00" y2="344.80" stroke="#b4b4b4" stroke-width="0.8" />
<text x="463.20" y="354.30" font-size="6.7" fill="#111" text-anchor="middle" textLength="10.50" lengthAdjust="spacingAndGlyphs" >Ряд</text>
<text x="455.00" y="366.10" font-size="6.7" fill="#111" text-anchor="end" textLength="27.60" lengthAdjust="spacingAndGlyphs" >Интервал</text><rect x="458.80" y="359.00" width="31.40" height="9.80" fill="#fff" stroke="#b2b2b2" stroke-width="0.7" rx="0.8" /><rect x="481.40" y="359.50" width="8.30" height="8.80" fill="#f2f2f2" /><line x1="481.40" y1="359.40" x2="481.40" y2="368.40" stroke="#c4c4c4" stroke-width="0.6" /><text x="461.80" y="366.10" font-size="6.7" fill="#111" textLength="11.30" lengthAdjust="spacingAndGlyphs" >5.04</text><path d="M484.0 363.09999999999997h3.2l-1.6-2.5z" fill="#d8262a" /><path d="M484.0 364.7h3.2l-1.6 2.5z" fill="#2c9a3c" /><text x="492.30" y="366.10" font-size="6.6" fill="#111" textLength="6.80" lengthAdjust="spacingAndGlyphs" >мм</text>
<text x="455.00" y="383.20" font-size="6.7" fill="#111" text-anchor="end" textLength="17.20" lengthAdjust="spacingAndGlyphs" >Сдвиг</text><rect x="458.80" y="376.10" width="31.40" height="9.80" fill="#fff" stroke="#b2b2b2" stroke-width="0.7" rx="0.8" /><rect x="481.40" y="376.60" width="8.30" height="8.80" fill="#f2f2f2" /><line x1="481.40" y1="376.50" x2="481.40" y2="385.50" stroke="#c4c4c4" stroke-width="0.6" /><text x="461.80" y="383.20" font-size="6.7" fill="#111" textLength="11.30" lengthAdjust="spacingAndGlyphs" >0.00</text><path d="M484.0 380.2h3.2l-1.6-2.5z" fill="#d8262a" /><path d="M484.0 381.8h3.2l-1.6 2.5z" fill="#2c9a3c" /><text x="492.30" y="383.20" font-size="6.6" fill="#111" textLength="6.80" lengthAdjust="spacingAndGlyphs" >мм</text>
<line x1="418.70" y1="392.80" x2="507.00" y2="392.80" stroke="#b4b4b4" stroke-width="0.8" />
<text x="455.00" y="406.40" font-size="6.7" fill="#111" text-anchor="end" textLength="24.20" lengthAdjust="spacingAndGlyphs" >Поворот</text><rect x="458.80" y="399.30" width="31.40" height="9.80" fill="#fff" stroke="#b2b2b2" stroke-width="0.7" rx="0.8" /><rect x="481.40" y="399.80" width="8.30" height="8.80" fill="#f2f2f2" /><line x1="481.40" y1="399.70" x2="481.40" y2="408.70" stroke="#c4c4c4" stroke-width="0.6" /><text x="461.80" y="406.40" font-size="6.7" fill="#111" textLength="3.60" lengthAdjust="spacingAndGlyphs" >0</text><path d="M484.0 403.4h3.2l-1.6-2.5z" fill="#d8262a" /><path d="M484.0 405.0h3.2l-1.6 2.5z" fill="#2c9a3c" /><text x="492.60" y="405.80" font-size="6.5" fill="#111" >°</text>
<rect x="422.00" y="415.10" width="6.40" height="6.40" fill="#fff" stroke="#444" stroke-width="0.8" />
<text x="430.60" y="420.50" font-size="6.7" fill="#111" textLength="56.50" lengthAdjust="spacingAndGlyphs" >Подогнать по сетке</text>
<rect x="422.00" y="426.80" width="6.40" height="6.40" fill="#fff" stroke="#444" stroke-width="0.8" /><path d="M423.3 430.1l1.5 1.7 2.5-3.6" fill="none" stroke="#111" stroke-width="1.1" />
<text x="430.60" y="432.20" font-size="6.7" fill="#111" textLength="55.50" lengthAdjust="spacingAndGlyphs" >Обрезать по форме</text>
<rect x="528.00" y="13.00" width="130.00" height="424.00" fill="#c3d5ee" />
<rect x="528.00" y="13.00" width="130.00" height="17.50" fill="url(#gTitle)" />
<rect x="530.30" y="16.00" width="1.00" height="1.00" fill="#506590" />
<rect x="530.30" y="17.90" width="1.00" height="1.00" fill="#506590" />
<rect x="530.30" y="19.80" width="1.00" height="1.00" fill="#506590" />
<rect x="530.30" y="21.70" width="1.00" height="1.00" fill="#506590" />
<rect x="530.30" y="23.60" width="1.00" height="1.00" fill="#506590" />
<rect x="530.30" y="25.50" width="1.00" height="1.00" fill="#506590" />
<rect x="530.30" y="27.40" width="1.00" height="1.00" fill="#506590" />
<text x="535.50" y="25.30" font-size="8.4" fill="#1d2c56" textLength="79.00" lengthAdjust="spacingAndGlyphs" >Список Цвет-Объект</text>
<rect x="531.50" y="30.80" width="126.50" height="12.00" fill="#dce8f8" />
<path d="M531.9 36.3l1.9-1.7 1.9 1.7M531.9 38.9l1.9-1.7 1.9 1.7" fill="none" stroke="#a9b6cc" stroke-width="0.9" />
<rect x="548.60" y="32.40" width="42.80" height="8.50" fill="#f0f0f0" stroke="#a8a8a8" stroke-width="0.7" />
<text x="569.60" y="39.10" font-size="6.8" fill="#111" text-anchor="middle" textLength="26.70" lengthAdjust="spacingAndGlyphs" >Показать</text>
<svg x="594.2" y="31" width="19" height="11" viewBox="594.2 31 19 11"><text x="592.30" y="39.10" font-size="6.8" fill="#111" textLength="20.50" lengthAdjust="spacingAndGlyphs" >Объект</text></svg>
<text x="615.70" y="39.10" font-size="6.8" fill="#111" textLength="9.30" lengthAdjust="spacingAndGlyphs" >Тип</text>
<text x="632.00" y="39.10" font-size="6.8" fill="#111" textLength="21.80" lengthAdjust="spacingAndGlyphs" >Стежки</text>
<rect x="532.60" y="43.30" width="125.40" height="393.70" fill="#c0c0c0" />
<line x1="557.60" y1="43.30" x2="557.60" y2="437.00" stroke="#cbcbcb" stroke-width="0.8" />
<line x1="577.90" y1="43.30" x2="577.90" y2="437.00" stroke="#cbcbcb" stroke-width="0.8" />
<line x1="596.00" y1="43.30" x2="596.00" y2="437.00" stroke="#cbcbcb" stroke-width="0.8" />
<line x1="613.40" y1="43.30" x2="613.40" y2="437.00" stroke="#cbcbcb" stroke-width="0.8" />
<line x1="632.20" y1="43.30" x2="632.20" y2="437.00" stroke="#cbcbcb" stroke-width="0.8" />
<line x1="532.60" y1="55.00" x2="658.00" y2="55.00" stroke="#cbcbcb" stroke-width="0.8" />
<line x1="532.60" y1="77.30" x2="658.00" y2="77.30" stroke="#cbcbcb" stroke-width="0.8" />
<line x1="532.60" y1="99.90" x2="658.00" y2="99.90" stroke="#cbcbcb" stroke-width="0.8" />
<line x1="532.60" y1="122.50" x2="658.00" y2="122.50" stroke="#cbcbcb" stroke-width="0.8" />
<line x1="532.60" y1="145.10" x2="658.00" y2="145.10" stroke="#cbcbcb" stroke-width="0.8" />
<line x1="532.60" y1="167.70" x2="658.00" y2="167.70" stroke="#cbcbcb" stroke-width="0.8" />
<line x1="532.60" y1="190.30" x2="658.00" y2="190.30" stroke="#cbcbcb" stroke-width="0.8" />
<line x1="532.60" y1="212.90" x2="658.00" y2="212.90" stroke="#cbcbcb" stroke-width="0.8" />
<line x1="532.60" y1="235.50" x2="658.00" y2="235.50" stroke="#cbcbcb" stroke-width="0.8" />
<line x1="532.60" y1="258.10" x2="658.00" y2="258.10" stroke="#cbcbcb" stroke-width="0.8" />
<line x1="532.60" y1="280.70" x2="658.00" y2="280.70" stroke="#cbcbcb" stroke-width="0.8" />
<line x1="532.60" y1="303.30" x2="658.00" y2="303.30" stroke="#cbcbcb" stroke-width="0.8" />
<line x1="532.60" y1="325.90" x2="658.00" y2="325.90" stroke="#cbcbcb" stroke-width="0.8" />
<line x1="532.60" y1="348.50" x2="658.00" y2="348.50" stroke="#cbcbcb" stroke-width="0.8" />
<line x1="532.60" y1="371.10" x2="658.00" y2="371.10" stroke="#cbcbcb" stroke-width="0.8" />
<line x1="532.60" y1="393.70" x2="658.00" y2="393.70" stroke="#cbcbcb" stroke-width="0.8" />
<line x1="532.60" y1="416.30" x2="658.00" y2="416.30" stroke="#cbcbcb" stroke-width="0.8" />
<text x="545.90" y="51.50" font-size="6.3" fill="#111" text-anchor="middle" >1</text>
<text x="586.60" y="51.50" font-size="6.3" fill="#111" text-anchor="middle" >1</text>
<text x="635.60" y="51.50" font-size="6.7" fill="#111" textLength="17.10" lengthAdjust="spacingAndGlyphs" >17066</text>
<line x1="536.60" y1="66.80" x2="543.00" y2="66.80" stroke="#9a9a9a" stroke-width="0.8" />
<rect x="542.90" y="60.40" width="12.20" height="12.40" fill="#1c1c86" stroke="#2c2cb8" stroke-width="1" />
<text x="549.00" y="69.00" font-size="6.4" fill="#e8e8f4" text-anchor="middle" >1</text>
<rect x="558.30" y="57.30" width="18.60" height="19.20" fill="#c2c2c8" stroke="#2424e6" stroke-width="1.2" />
<path d="M562.4 58.2L565.4 57.8H571.2L575.8 64.2Q575.6 66.8 573.6 67.6Q570.6 68.2 569.8 70.2Q569.2 73.6 567.6 74.8Q564.4 76.2 561.2 76H558.9V69.4Q560.6 66.6 561 63.4Q561.6 60 562.4 58.2Z" fill="#231c74" />
<text x="586.60" y="69.00" font-size="6.3" fill="#111" text-anchor="middle" >1</text>
<path d="M602 62.6h3.2q3 0.4 3 4.2t-3 4.2h-3.2z" fill="#f4f4f4" stroke="#444" stroke-width="0.8" />
<circle cx="606" cy="66.9" r="3.5" fill="none" stroke="#d83030" stroke-width="0.8"/>
<line x1="600.20" y1="66.90" x2="609.00" y2="66.90" stroke="#d83030" stroke-width="0.8" />
<circle cx="600.6" cy="62.6" r="1.2" fill="#2e9a40"/>
<rect x="618.10" y="63.20" width="1.90" height="1.90" fill="#e01c24" />
<rect x="618.10" y="65.60" width="1.90" height="1.90" fill="#e01c24" />
<rect x="618.10" y="68.00" width="1.90" height="1.90" fill="#e01c24" />
<rect x="620.50" y="63.20" width="1.90" height="1.90" fill="#e01c24" />
<rect x="620.50" y="65.60" width="1.90" height="1.90" fill="#e01c24" />
<rect x="620.50" y="68.00" width="1.90" height="1.90" fill="#e01c24" />
<rect x="622.90" y="63.20" width="1.90" height="1.90" fill="#e01c24" />
<rect x="622.90" y="65.60" width="1.90" height="1.90" fill="#e01c24" />
<rect x="622.90" y="68.00" width="1.90" height="1.90" fill="#e01c24" />
<text x="635.60" y="69.00" font-size="6.7" fill="#111" textLength="17.10" lengthAdjust="spacingAndGlyphs" >17066</text>
</svg>
</body></html>
